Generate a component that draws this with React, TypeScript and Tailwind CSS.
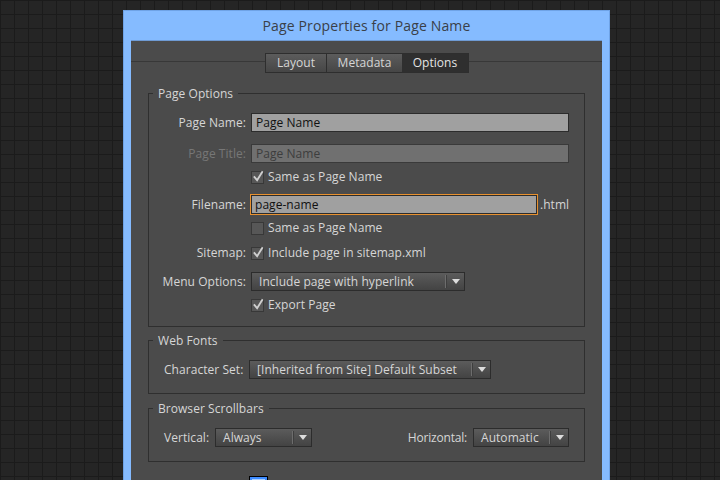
const font = { fontFamily: '"Open Sans", "Noto Sans", sans-serif' };

function Check({ checked, label, disabled }: { checked?: boolean; label: string; disabled?: boolean }) {
  return (
    <div className="flex items-center gap-[4px]">
      <span className="relative w-[13px] h-[13px] bg-[#575757] border border-[#383838] shrink-0">
        {checked && (
          <svg viewBox="0 0 14 14" className="absolute left-[0px] top-[-3px] w-[13px] h-[14px]" fill="none">
            <path d="M2 7.5 L5.5 11.5 L11.5 2" stroke="#cfcfcf" strokeWidth="2" />
          </svg>
        )}
      </span>
      <span className={disabled ? "text-[#777777]" : "text-[#d6d6d6]"}>{label}</span>
    </div>
  );
}

function Select({ value, width }: { value: string; width: string }) {
  return (
    <div className={`${width} h-[19px] flex items-center border border-[#2c2c2c] bg-gradient-to-b from-[#5c5c5c] to-[#434343] text-[#d6d6d6]`}>
      <span className="flex-1 pl-[7px] leading-[17px] whitespace-nowrap overflow-hidden">{value}</span>
      <span className="w-[2px] h-[13px] bg-[#6d6d6d] border-r border-[#3e3e3e]" />
      <span className="w-[17px] flex justify-center">
        <svg viewBox="0 0 8 5" className="w-[8px] h-[5px]">
          <path d="M0 0 H8 L4 5 Z" fill="#dddddd" />
        </svg>
      </span>
    </div>
  );
}

function Row({ label, children, className, disabled }: { label?: string; children: React.ReactNode; className?: string; disabled?: boolean }) {
  return (
    <div className={`flex items-center ${className ?? ""}`}>
      <span className={`w-[97px] mr-[5px] text-right whitespace-nowrap ${disabled ? "text-[#777777]" : "text-[#d6d6d6]"}`}>{label}</span>
      {children}
    </div>
  );
}

function Group({ title, children, className }: { title: string; children: React.ReactNode; className?: string }) {
  return (
    <fieldset className={`border border-[#2f2f2f] ${className ?? ""}`}>
      <legend className="ml-[4px] px-[5px] h-[16px] leading-[18px] text-[#d6d6d6]">{title}</legend>
      {children}
    </fieldset>
  );
}

export default function App() {
  return (
    <div
      style={font}
      className="h-[480px] w-[720px] overflow-hidden bg-[#252525] bg-[linear-gradient(#1b1b1b_1px,transparent_1px),linear-gradient(90deg,#1b1b1b_1px,transparent_1px)] bg-[size:14px_14px] pt-[10px] pl-[123px] text-[12px] tracking-[0.05px]"
    >
      <div className="w-[487px] h-[600px] bg-[#85bbff] border border-[#6fa3e6] px-[7px]">
        <div className="h-[29px] flex items-center justify-center text-[14px] tracking-[0.15px] text-[#3a4048]">Page Properties for Page Name</div>
        <div className="h-[560px] bg-[#4b4b4b] border-t border-[#6f9bd4] px-[17px] pt-[12px] relative">
          <div className="absolute left-0 right-0 top-[20px] h-px bg-[#383838]" />
          <div className="relative w-[204px] h-[20px] flex border border-[#2e2e2e] text-[#d6d6d6] leading-[18px] text-center ml-[117px]">
            <span className="w-[61px] bg-gradient-to-b from-[#5c5c5c] to-[#464646] border-r border-[#2e2e2e]">Layout</span>
            <span className="w-[75px] bg-gradient-to-b from-[#5c5c5c] to-[#464646]">Metadata</span>
            <span className="flex-1 bg-[#2f2f2f] text-[#e4e4e4]">Options</span>
          </div>

          <Group title="Page Options" className="mt-[12px] h-[242px]">
            <Row label="Page Name:" className="mt-[12px]">
              <div className="w-[318px] h-[19px] pl-[4px] leading-[17px] border border-[#2c2c2c] bg-[#a0a0a0] text-[#111111]">Page Name</div>
            </Row>
            <Row label="Page Title:" className="mt-[12px]" disabled>
              <div className="w-[318px] h-[19px] pl-[4px] leading-[17px] border border-[#3a3a3a] bg-[#707070] text-[#3d3d3d]">Page Name</div>
            </Row>
            <Row className="mt-[6px] h-[16px]">
              <Check checked label="Same as Page Name" />
            </Row>
            <Row label="Filename:" className="mt-[9px]">
              <div className="-ml-[1px] w-[288px] h-[21px] pl-[4px] leading-[19px] border border-[#e8912f] shadow-[inset_0_0_0_1px_#2c2c2c] bg-[#a0a0a0] text-[#111111]">page-name</div>
              <span className="ml-[2px] text-[#d6d6d6]">.html</span>
            </Row>
            <Row className="mt-[5px] h-[16px]">
              <Check label="Same as Page Name" />
            </Row>
            <Row label="Sitemap:" className="mt-[9px] h-[16px]">
              <Check checked label="Include page in sitemap.xml" />
            </Row>
            <Row label="Menu Options:" className="mt-[11px]">
              <Select value="Include page with hyperlink" width="w-[214px]" />
            </Row>
            <Row className="mt-[6px] h-[16px]">
              <Check checked label="Export Page" />
            </Row>
          </Group>

          <Group title="Web Fonts" className="mt-[5px] h-[62px]">
            <div className="mt-[12px] flex items-center">
              <span className="ml-[15px] w-[85px] text-[#d6d6d6]">Character Set:</span>
              <Select value="[Inherited from Site] Default Subset" width="w-[242px]" />
            </div>
          </Group>

          <Group title="Browser Scrollbars" className="mt-[6px] h-[62px]">
            <div className="mt-[12px] flex items-center pl-[15px] pr-[15px]">
              <span className="w-[51px] text-[#d6d6d6]">Vertical:</span>
              <Select value="Always" width="w-[97px]" />
              <span className="ml-auto mr-[6px] text-[#d6d6d6] tracking-[-0.2px]">Horizontal:</span>
              <Select value="Automatic" width="w-[96px]" />
            </div>
          </Group>

          <div className="ml-[101px] mt-[14px] w-[19px] h-[19px] border border-black bg-[#a9cfff] shadow-[inset_0_0_0_2px_#3d8bff]" />
        </div>
      </div>
    </div>
  );
}
